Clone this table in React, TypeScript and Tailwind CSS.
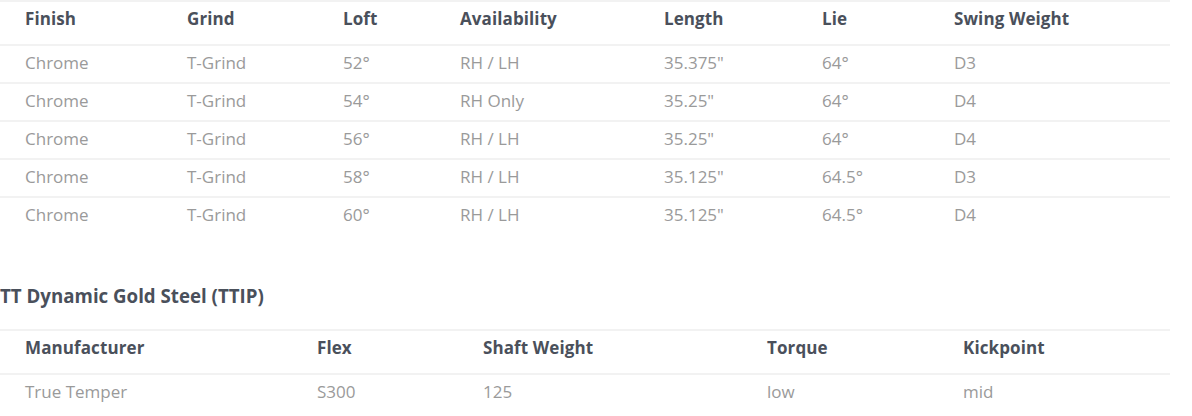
import React from "react";

const specRows = [
  ["Chrome", "T-Grind", "52°", "RH / LH", "35.375\"", "64°", "D3"],
  ["Chrome", "T-Grind", "54°", "RH Only", "35.25\"", "64°", "D4"],
  ["Chrome", "T-Grind", "56°", "RH / LH", "35.25\"", "64°", "D4"],
  ["Chrome", "T-Grind", "58°", "RH / LH", "35.125\"", "64.5°", "D3"],
  ["Chrome", "T-Grind", "60°", "RH / LH", "35.125\"", "64.5°", "D4"],
];

const specHead = ["Finish", "Grind", "Loft", "Availability", "Length", "Lie", "Swing Weight"];
const shaftHead = ["Manufacturer", "Flex", "Shaft Weight", "Torque", "Kickpoint"];
const shaftRows = [["True Temper", "S300", "125", "low", "mid"]];

export default function App() {
  return (
    <div
      className="w-[1192px] h-[416px] bg-white overflow-hidden"
      style={{ fontFamily: "'Open Sans', Lato, sans-serif" }}
    >
      <div className="w-[1170px]">
        <div className="grid grid-cols-[162px_156px_117px_204px_158px_132px_241px] border-t-2 border-[#f2f2f2] text-[17px] leading-[24px] font-bold tracking-[0.1px] text-[#4a505b]">
          {specHead.map((h) => (
            <div key={h} className="pl-[25px] pt-[5px] pb-[13px]">{h}</div>
          ))}
        </div>
        {specRows.map((r, i) => (
          <div
            key={i}
            className="grid grid-cols-[162px_156px_117px_204px_158px_132px_241px] border-t-2 border-[#f2f2f2] text-[17px] leading-[24px] text-[#9a9a9a]"
          >
            {r.map((c, j) => (
              <div key={j} className="pl-[25px] pt-[5px] pb-[7px]">{c}</div>
            ))}
          </div>
        ))}

        <h3 className="mt-[50px] mb-[21px] text-[18.7px] leading-[24px] font-bold text-[#4a505b]">
          TT Dynamic Gold Steel (TTIP)
        </h3>

        <div className="grid grid-cols-[292px_166px_284px_196px_232px] border-t-2 border-[#f2f2f2] text-[17px] leading-[24px] font-bold tracking-[0.1px] text-[#4a505b]">
          {shaftHead.map((h) => (
            <div key={h} className="pl-[25px] pt-[5px] pb-[13px]">{h}</div>
          ))}
        </div>
        {shaftRows.map((r, i) => (
          <div
            key={i}
            className="grid grid-cols-[292px_166px_284px_196px_232px] border-t-2 border-[#f2f2f2] text-[17px] leading-[24px] text-[#9a9a9a]"
          >
            {r.map((c, j) => (
              <div key={j} className="pl-[25px] pt-[5px] pb-[7px]">{c}</div>
            ))}
          </div>
        ))}
      </div>
    </div>
  );
}
